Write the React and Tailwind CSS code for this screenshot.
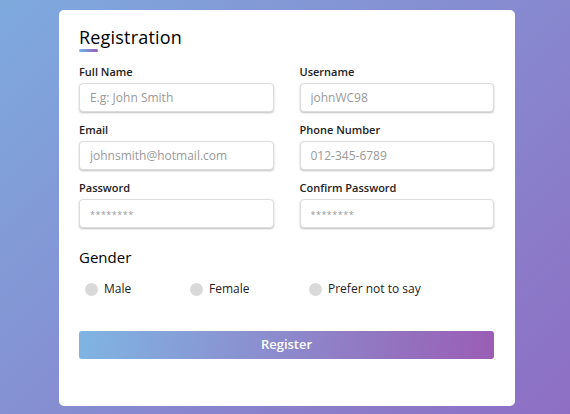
const fields = [
  { label: 'Full Name', placeholder: 'E.g: John Smith' },
  { label: 'Username', placeholder: 'johnWC98' },
  { label: 'Email', placeholder: 'johnsmith@hotmail.com' },
  { label: 'Phone Number', placeholder: '012-345-6789' },
  { label: 'Password', placeholder: '********', secret: true },
  { label: 'Confirm Password', placeholder: '********', secret: true },
]

const genders = [
  { label: 'Male', width: 'w-[105px]' },
  { label: 'Female', width: 'w-[119px]' },
  { label: 'Prefer not to say', width: '' },
]

export default function App() {
  return (
    <div
      className="min-h-[414px] w-full bg-[linear-gradient(135deg,#7eaade,#8e6ec3)] pt-[10px] pb-[9px]"
      style={{ fontFamily: '"Open Sans", sans-serif' }}
    >
      <div className="ml-[59px] w-[456px] rounded-[5px] bg-white pt-[14px] pr-[21px] pb-[47px] pl-[20px]">
        <div className="pb-[2px]">
          <h1 className="text-[18px] leading-[27px] font-medium text-black tracking-[0.2px]">Registration</h1>
          <div className="mt-[-2px] h-[3px] w-[19px] rounded-sm bg-[linear-gradient(90deg,#71b7e6,#9b59b6)]" />
        </div>

        <div className="mt-[11px] grid grid-cols-2 gap-x-[26px]">
          {fields.map((f) => (
            <div key={f.label} className="h-[58px]">
              <div className="h-[14px] text-[11px] leading-[14px] font-semibold text-[#222]">{f.label}</div>
              <input
                type="text"
                placeholder={f.placeholder}
                className={`mt-[4px] box-border h-[29px] w-full rounded-[4px] border border-[#ddd] bg-white px-[10px] text-[12px] text-[#333] shadow-[0_1px_2px_rgba(0,0,0,0.25)] outline-none placeholder:text-[#999] ${
                  f.secret ? 'placeholder:text-[9px] placeholder:tracking-[0.5px]' : ''
                }`}
              />
            </div>
          ))}
        </div>

        <div className="mt-[7px] text-[15px] leading-[22px] font-medium text-black">Gender</div>

        <div className="mt-[11px] flex h-[20px] items-center pl-[6px]">
          {genders.map((g) => (
            <label key={g.label} className={`flex items-center gap-[6px] ${g.width}`}>
              <span className="h-[13px] w-[13px] rounded-full bg-[#d9d9d9]" />
              <span className="text-[12px] text-[#222]">{g.label}</span>
            </label>
          ))}
        </div>

        <button
          type="button"
          className="mt-[32px] h-[28px] w-full rounded-[3px] bg-[linear-gradient(100deg,#7fb5e3,#9a5db5)] text-[13px] font-semibold text-white"
        >
          Register
        </button>
      </div>
    </div>
  )
}
